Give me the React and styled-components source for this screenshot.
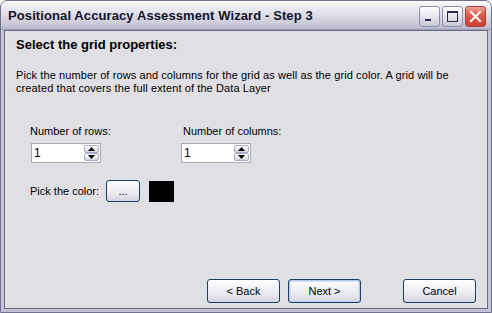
import React from "react";
import styled, { createGlobalStyle } from "styled-components";

const GlobalStyle = createGlobalStyle`
  html, body { margin: 0; padding: 0; background: #ffffff; }
  body { font-family: "Liberation Sans", Arial, sans-serif; }
`;

const Window = styled.div`
  width: 492px;
  height: 313px;
  box-sizing: border-box;
  display: flex;
  flex-direction: column;
  border-radius: 7px 7px 0 0;
  background: #c4c3d6;
  border: 1px solid #72718e;
  overflow: hidden;
`;

const TitleBar = styled.div`
  height: 28px;
  flex: none;
  display: flex;
  align-items: center;
  justify-content: space-between;
  padding: 0 5px 0 7px;
  background: linear-gradient(
    to bottom,
    #fdfdfe 0%,
    #efeff4 15%,
    #e0e0e9 45%,
    #cfcfdc 75%,
    #b9b8cc 100%
  );
  border-bottom: 1px solid #9c9bb4;
`;

const Title = styled.span`
  font-family: "Liberation Sans", Arial, sans-serif;
  font-size: 13px;
  font-weight: bold;
  color: #14142c;
  letter-spacing: 0.1px;
  margin-top: 1px;
`;

const TitleButtons = styled.div`
  display: flex;
  gap: 2px;
  margin-top: 3px;
`;

const CaptionButton = styled.div`
  width: 21px;
  height: 21px;
  box-sizing: border-box;
  border-radius: 3px;
  border: 1px solid ${(p) => (p.$close ? "#a8443c" : "#8f8ea8")};
  background: ${(p) =>
    p.$close
      ? "linear-gradient(to bottom, #f2a496 0%, #e2604e 35%, #d34836 80%, #c94234 100%)"
      : "linear-gradient(to bottom, #ffffff 0%, #eaeaf1 40%, #d4d4e0 80%, #c4c4d4 100%)"};
  display: flex;
  align-items: center;
  justify-content: center;
`;

const Client = styled.div`
  flex: 1;
  margin: 0 3px 3px 3px;
  background: #e0dfe3;
  border: 1px solid #6d6c88;
  display: flex;
  flex-direction: column;
  padding: 6px 11px 5px 11px;
  box-sizing: border-box;
  font-size: 11px;
  color: #000;
`;

const Heading = styled.div`
  font-size: 13px;
  font-weight: bold;
  line-height: 16px;
`;

const Description = styled.p`
  margin: 16px 0 0 0;
  font-size: 11px;
  line-height: 13px;
  letter-spacing: 0.1px;
`;

const FieldRow = styled.div`
  display: flex;
  margin-top: 30px;
  padding-left: 14px;
`;

const Field = styled.div`
  display: flex;
  flex-direction: column;
  width: ${(p) => p.$width}px;
`;

const Label = styled.label`
  font-size: 11px;
  line-height: 13px;
  margin-left: ${(p) => p.$offset || 0}px;
  margin-bottom: ${(p) => (p.$inline ? 0 : 5)}px;
`;

const SpinBox = styled.div`
  width: 70px;
  height: 20px;
  box-sizing: border-box;
  border: 1px solid #a5acb2;
  background: #ffffff;
  display: flex;
  align-items: center;
  justify-content: space-between;
  padding: 0 1px 0 2px;
  margin-left: ${(p) => p.$offset}px;
`;

const SpinValue = styled.span`
  font-size: 12px;
  color: #000;
`;

const SpinButtons = styled.div`
  display: flex;
  flex-direction: column;
`;

const SpinArrow = styled.div`
  width: 15px;
  height: 8px;
  box-sizing: border-box;
  border: 1px solid #a8adc2;
  border-radius: 2px;
  background: linear-gradient(to bottom, #ffffff 0%, #e8e8f0 60%, #d2d2de 100%);
  display: flex;
  align-items: center;
  justify-content: center;
`;

const ColorRow = styled.div`
  display: flex;
  align-items: center;
  margin-top: 17px;
  padding-left: 14px;
`;

const Button = styled.button`
  width: ${(p) => p.$width || 73}px;
  height: ${(p) => p.$height || 24}px;
  box-sizing: border-box;
  border: 1px solid #1c3f66;
  border-radius: 3px;
  background: linear-gradient(
    to bottom,
    #ffffff 0%,
    #f4f4f8 30%,
    #e6e6ee 70%,
    #d3d2e0 100%
  );
  box-shadow: ${(p) =>
    p.$default ? "inset 0 0 0 1px #b8c8e8, inset 0 0 0 2px #d8e0f0" : "none"};
  font-family: "Liberation Sans", Arial, sans-serif;
  font-size: 11px;
  color: #000;
  padding: 0;
  display: flex;
  align-items: center;
  justify-content: center;
`;

const Swatch = styled.div`
  width: 25px;
  height: 21px;
  background: #000;
  margin-left: 9px;
`;

const Footer = styled.div`
  margin-top: auto;
  display: flex;
  justify-content: flex-end;
`;

const Spacer = styled.div`
  width: ${(p) => p.$w}px;
`;

function Arrow({ up }) {
  return (
    <svg width="7" height="4" viewBox="0 0 7 4">
      {up ? (
        <polygon points="0,4 7,4 3.5,0" fill="#000" />
      ) : (
        <polygon points="0,0 7,0 3.5,4" fill="#000" />
      )}
    </svg>
  );
}

function NumericUpDown({ offset }) {
  return (
    <SpinBox $offset={offset}>
      <SpinValue>1</SpinValue>
      <SpinButtons>
        <SpinArrow>
          <Arrow up />
        </SpinArrow>
        <SpinArrow>
          <Arrow />
        </SpinArrow>
      </SpinButtons>
    </SpinBox>
  );
}

export default function App() {
  return (
    <>
      <GlobalStyle />
      <Window>
        <TitleBar>
          <Title>Positional Accuracy Assessment Wizard - Step 3</Title>
          <TitleButtons>
            <CaptionButton>
              <svg width="19" height="19" viewBox="0 0 19 19">
                <rect x="5" y="12" width="6" height="2" fill="#2c2c48" />
              </svg>
            </CaptionButton>
            <CaptionButton>
              <svg width="19" height="19" viewBox="0 0 19 19">
                <rect x="4.5" y="4.5" width="10" height="10" fill="none" stroke="#2c2c48" strokeWidth="1" />
                <rect x="4" y="4" width="11" height="2" fill="#2c2c48" />
              </svg>
            </CaptionButton>
            <CaptionButton $close>
              <svg width="19" height="19" viewBox="0 0 19 19">
                <path d="M5 5 L14 14 M14 5 L5 14" stroke="#ffffff" strokeWidth="2.2" strokeLinecap="square" />
              </svg>
            </CaptionButton>
          </TitleButtons>
        </TitleBar>
        <Client>
          <Heading>Select the grid properties:</Heading>
          <Description>
            Pick the number of rows and columns for the grid as well as the grid color. A grid will be
            <br />
            created that covers the full extent of the Data Layer
          </Description>
          <FieldRow>
            <Field $width={151}>
              <Label>Number of rows:</Label>
              <NumericUpDown offset={1} />
            </Field>
            <Field $width={120}>
              <Label $offset={2}>Number of columns:</Label>
              <NumericUpDown offset={0} />
            </Field>
          </FieldRow>
          <ColorRow>
            <Label as="span" $inline>Pick the color:</Label>
            <Spacer $w={7} />
            <Button $width={34} $height={22}>...</Button>
            <Swatch />
          </ColorRow>
          <Footer>
            <Button>&lt; Back</Button>
            <Spacer $w={8} />
            <Button $default>Next &gt;</Button>
            <Spacer $w={42} />
            <Button>Cancel</Button>
          </Footer>
        </Client>
      </Window>
    </>
  );
}
